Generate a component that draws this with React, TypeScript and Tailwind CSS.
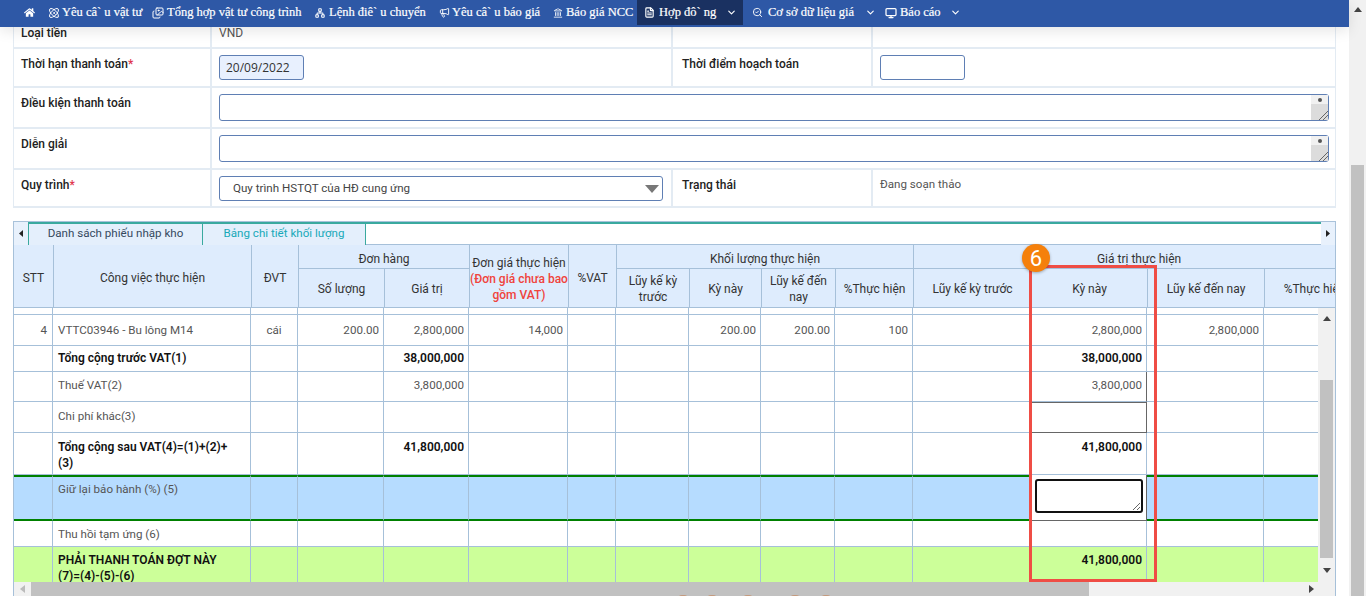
import type { ReactNode } from 'react'
import { ChevronDown, Atom, Images, Network, Megaphone, Landmark, FileText, SearchCheck, Monitor } from 'lucide-react'
import { FaHome } from 'react-icons/fa'

type NavItem = { label: string; icon: ReactNode; className: string; chevron?: boolean; active?: boolean }

const navItems: NavItem[] = [
  { label: 'Yêu câ` u vật tư', icon: <Atom size={12} strokeWidth={2} />, className: 'w-[104px] gap-[2px]' },
  { label: 'Tổng hợp vật tư công trình', icon: <Images size={12} strokeWidth={2} />, className: 'w-[163px] gap-[3px]' },
  { label: 'Lệnh điê` u chuyển', icon: <Network size={10} strokeWidth={2.5} />, className: 'w-[124px] gap-[4px]' },
  { label: 'Yêu câ` u báo giá', icon: <Megaphone size={11} strokeWidth={2} />, className: 'w-[114px] gap-[2px]' },
  { label: 'Báo giá NCC', icon: <Landmark size={10} strokeWidth={2} />, className: 'w-[84px] gap-[3px]' },
  { label: 'Hợp đô` ng', icon: <FileText size={11} strokeWidth={2.5} />, className: 'w-[106px] gap-[4px] pl-[7px]', chevron: true, active: true },
  { label: 'Cơ sở dữ liệu giá', icon: <SearchCheck size={11} strokeWidth={2} />, className: 'ml-[9px] w-[133px] gap-[5px]', chevron: true },
  { label: 'Báo cáo', icon: <Monitor size={12} strokeWidth={2.5} />, className: 'gap-[3px]', chevron: true },
]

const Nav = () => (
  <nav className="relative z-10 flex h-[27px] shrink-0 items-start bg-[#2e58a6] text-white shadow-[0_4px_14px_rgba(0,0,0,0.1)] font-['Liberation_Serif',serif] text-[12.5px] [-webkit-text-stroke:0.2px_white]">
    <FaHome className="ml-[24px] mt-[7px] w-[11px] shrink-0" size={11} />
    <div className="w-[13px] shrink-0" />
    {navItems.map((item) => (
      <div
        key={item.label}
        className={`flex h-[25px] shrink-0 items-center whitespace-nowrap ${item.className} ${item.active ? 'bg-[#1a3161]' : ''}`}
      >
        {item.icon}
        <span>{item.label}</span>
        {item.chevron ? <ChevronDown size={11} strokeWidth={2.5} className="ml-[6px]" /> : null}
      </div>
    ))}
  </nav>
)

const Label = ({ children, required, wide }: { children: ReactNode; required?: boolean; wide?: boolean }) => (
  <div className={`text-[12px] font-medium text-[#222] ${wide ? 'px-[9px]' : 'px-[7px]'}`}>
    {children}
    {required ? <span className="text-[#e0364c]">*</span> : null}
  </div>
)

const FakeTextarea = () => (
  <div className="flex h-[27px] w-full rounded-[3px] border border-[#5f7fb4] bg-white">
    <div className="flex-1" />
    <div className="flex w-[17px] flex-col">
      <div className="flex h-[9px] items-center justify-center bg-[#f1f1f1]">
        <div className="h-[4px] w-[4px] rounded-full bg-[#555]" />
      </div>
      <div className="relative flex-1 overflow-hidden bg-[#dcdcdc]">
        <svg className="absolute bottom-0 right-0" width="10" height="10" viewBox="0 0 10 10">
          <path d="M1 10 L10 1 M5 10 L10 5" stroke="#666" strokeWidth="1" />
        </svg>
      </div>
    </div>
  </div>
)

const FormPanel = () => (
  <div className="mx-[13px] w-[1323px] border-x border-[#e3ebf3] text-[12px] font-['Roboto',sans-serif]">
    <div className="grid h-[22px] grid-cols-[198px_461px_200px_1fr] border-b-2 border-[#e3ebf3]">
      <div className="border-r-2 border-[#e3ebf3]">
        <div className="-mt-[3px]">
          <Label>Loại tiền</Label>
        </div>
      </div>
      <div className="border-r-2 border-[#e3ebf3] px-[7px] text-[#555]">
        <div className="-mt-[3px]">VND</div>
      </div>
      <div className="border-r-2 border-[#e3ebf3]" />
      <div />
    </div>
    <div className="grid h-[39px] grid-cols-[198px_461px_200px_1fr] border-b-2 border-[#e3ebf3]">
      <div className="border-r-2 border-[#e3ebf3] pt-[6px]">
        <Label required>Thời hạn thanh toán</Label>
      </div>
      <div className="border-r-2 border-[#e3ebf3] px-[7px] pt-[6px]">
        <input
          readOnly
          value="20/09/2022"
          className="h-[25px] w-[85px] rounded-[3px] border border-[#5f7fb4] bg-[#e8f0fe] px-[6px] text-[12px] text-[#333] font-['Open_Sans',sans-serif]"
        />
      </div>
      <div className="border-r-2 border-[#e3ebf3] pt-[6px]">
        <Label wide>Thời điểm hoạch toán</Label>
      </div>
      <div className="px-[7px] pt-[6px]">
        <input readOnly className="h-[25px] w-[85px] rounded-[3px] border border-[#5f7fb4] bg-white" />
      </div>
    </div>
    <div className="grid h-[41px] grid-cols-[198px_1fr] border-b-2 border-[#e3ebf3]">
      <div className="border-r-2 border-[#e3ebf3] pt-[6px]">
        <Label>Điều kiện thanh toán</Label>
      </div>
      <div className="pl-[7px] pr-[6px] pt-[6px]">
        <FakeTextarea />
      </div>
    </div>
    <div className="grid h-[41px] grid-cols-[198px_1fr] border-b-2 border-[#e3ebf3]">
      <div className="border-r-2 border-[#e3ebf3] pt-[6px]">
        <Label>Diễn giải</Label>
      </div>
      <div className="pl-[7px] pr-[6px] pt-[6px]">
        <FakeTextarea />
      </div>
    </div>
    <div className="grid h-[38px] grid-cols-[198px_461px_200px_1fr] border-b-2 border-[#e3ebf3]">
      <div className="border-r-2 border-[#e3ebf3] pt-[6px]">
        <Label required>Quy trình</Label>
      </div>
      <div className="border-r-2 border-[#e3ebf3] px-[7px] pt-[6px]">
        <div className="flex h-[25px] w-[444px] items-center justify-between rounded-[3px] border border-[#5f7fb4] bg-white pl-[13px] pr-[3px] text-[11.6px] text-[#444]">
          <span>Quy trình HSTQT của HĐ cung ứng</span>
          <svg width="14" height="8" viewBox="0 0 14 8">
            <path d="M0 0 H14 L7 8 Z" fill="#777" />
          </svg>
        </div>
      </div>
      <div className="border-r-2 border-[#e3ebf3] pt-[6px]">
        <Label wide>Trạng thái</Label>
      </div>
      <div className="px-[7px] pt-[6px] text-[11.6px] text-[#555]">Đang soạn thảo</div>
    </div>
  </div>
)

const Tabs = () => (
  <div className="flex h-[24px] border-x border-t border-[#a9c2da] text-[11.6px]">
    <div className="flex w-[14px] items-center justify-center bg-[#e8f1fc]">
      <svg width="4" height="7" viewBox="0 0 4 7">
        <path d="M4 0 V7 L0 3.5 Z" fill="#222" />
      </svg>
    </div>
    <div className="flex flex-1 border-t-2 border-[#3aa99f]">
      <div className="flex w-[175px] items-center justify-center border-x border-[#3aa99f] bg-[#e4effc] pb-[1px] text-[#34495e]">
        Danh sách phiếu nhập kho
      </div>
      <div className="flex w-[163px] items-center justify-center border-r border-[#3aa99f] bg-[#e4effc] pb-[1px] text-[#17a9b8]">
        Bảng chi tiết khối lượng
      </div>
      <div className="flex-1 border-b border-[#a6c0d9]" />
    </div>
    <div className="flex w-[14px] items-center justify-center bg-[#e8f1fc]">
      <svg width="4" height="7" viewBox="0 0 4 7">
        <path d="M0 0 V7 L4 3.5 Z" fill="#222" />
      </svg>
    </div>
  </div>
)

const headCell = 'border-r border-b border-[#a6c0d9] bg-[#deecfd] px-[2px] text-center font-normal text-[#333] leading-[16px]'

const headCols = [40, 198, 47, 86, 85, 99, 48, 73, 72, 74, 78, 118, 116, 117, 100]

const HeaderTable = () => (
  <table className="w-[1351px] table-fixed border-separate border-spacing-0">
    <colgroup>
      {headCols.map((w, i) => (
        <col key={i} style={{ width: w }} />
      ))}
    </colgroup>
    <thead>
      <tr className="h-[24px]">
        <th rowSpan={2} className={`${headCell} pt-[3px]`}>STT</th>
        <th rowSpan={2} className={`${headCell} pt-[3px]`}>Công việc thực hiện</th>
        <th rowSpan={2} className={`${headCell} pt-[3px]`}>ĐVT</th>
        <th colSpan={2} className={`${headCell} pt-[4px]`}>Đơn hàng</th>
        <th rowSpan={2} className={`${headCell} whitespace-nowrap !px-0 pt-[5px]`}>
          Đơn giá thực hiện
          <br />
          <span className="font-medium text-[#f0433c]">
            (Đơn giá chưa bao
            <br />
            gồm VAT)
          </span>
        </th>
        <th rowSpan={2} className={`${headCell} pt-[3px]`}>%VAT</th>
        <th colSpan={4} className={`${headCell} pt-[4px]`}>Khối lượng thực hiện</th>
        <th colSpan={4} className={`${headCell} pt-[4px]`}>Giá trị thực hiện</th>
      </tr>
      <tr className="h-[39px]">
        <th className={`${headCell} pt-[2px]`}>Số lượng</th>
        <th className={`${headCell} pt-[2px]`}>Giá trị</th>
        <th className={`${headCell} pt-[2px]`}>Lũy kế kỳ trước</th>
        <th className={`${headCell} pt-[2px]`}>Kỳ này</th>
        <th className={`${headCell} pt-[2px]`}>Lũy kế đến nay</th>
        <th className={`${headCell} pt-[2px]`}>%Thực hiện</th>
        <th className={`${headCell} pt-[2px]`}>Lũy kế kỳ trước</th>
        <th className={`${headCell} pt-[2px]`}>Kỳ này</th>
        <th className={`${headCell} pt-[2px]`}>Lũy kế đến nay</th>
        <th className={`${headCell} whitespace-nowrap pt-[2px]`}>%Thực hiện</th>
      </tr>
    </thead>
  </table>
)

type Row = {
  height: string
  pad: string
  label: string
  bold?: boolean
  stt?: string
  unit?: string
  values: Record<number, string>
  bg?: string
  edge?: string
  current?: string
  edit?: boolean
}

const rows: Row[] = [
  { height: 'h-[7px]', pad: '', label: '', values: {} },
  {
    height: 'h-[31px]',
    pad: 'pt-[7px]',
    label: 'VTTC03946 - Bu lông M14',
    stt: '4',
    unit: 'cái',
    values: { 3: '200.00', 4: '2,800,000', 5: '14,000', 8: '200.00', 9: '200.00', 10: '100', 12: '2,800,000', 13: '2,800,000' },
  },
  { height: 'h-[26px]', pad: 'pt-[4px]', label: 'Tổng cộng trước VAT(1)', bold: true, values: { 4: '38,000,000', 12: '38,000,000' } },
  { height: 'h-[30px]', pad: 'pt-[5px]', label: 'Thuế VAT(2)', values: { 4: '3,800,000', 12: '3,800,000' }, current: 'border-r-[#666]' },
  { height: 'h-[31px]', pad: 'pt-[6px]', label: 'Chi phí khác(3)', values: {}, current: 'border-r-[#666] border-b-[#666] border-t border-t-[#666]' },
  { height: 'h-[42px]', pad: 'pt-[6px]', label: 'Tổng cộng sau VAT(4)=(1)+(2)+\n(3)', bold: true, values: { 4: '41,800,000', 12: '41,800,000' } },
  {
    height: 'h-[46px]',
    pad: 'pt-[4px]',
    label: 'Giữ lại bảo hành (%) (5)',
    values: {},
    bg: 'bg-[#b6dcff]',
    edge: 'border-t-2 border-t-[#008000] border-b-2 border-b-[#008000]',
    current: 'border-r-[#666] border-b-[#666] bg-white',
    edit: true,
  },
  { height: 'h-[26px]', pad: 'pt-[5px]', label: 'Thu hồi tạm ứng (6)', values: {} },
  { height: 'h-[42px]', pad: 'pt-[5px]', label: 'PHẢI THANH TOÁN ĐỢT NÀY\n(7)=(4)-(5)-(6)', bold: true, values: { 12: '41,800,000' }, bg: 'bg-[#ccff99]' },
]

const bodyCols = [39, 198, 47, 86, 85, 99, 48, 73, 72, 74, 78, 118, 116, 117, 100]

const BodyTable = () => (
  <table className="w-[1350px] table-fixed border-separate border-spacing-0 text-[11.6px]">
    <colgroup>
      {bodyCols.map((w, i) => (
        <col key={i} style={{ width: w }} />
      ))}
    </colgroup>
    <tbody>
      {rows.map((row) => (
        <tr key={row.label || 'spacer'} className={row.height}>
          {bodyCols.map((_, col) => {
            const base = `border-r border-b border-[#a6c0d9] align-top leading-[16px] ${row.pad} ${row.bg ?? 'bg-white'}`
            const tone = row.bold ? 'text-[12px] font-semibold text-[#111]' : 'text-[#555]'
            if (col === 0) {
              return (
                <td key={col} className={`${base} ${row.edge ?? ''} pr-[5px] text-right text-[#555]`}>
                  {row.stt}
                </td>
              )
            }
            if (col === 1) {
              return (
                <td key={col} className={`${base} ${row.edge ?? ''} whitespace-pre-line px-[5px] ${tone}`}>
                  {row.label}
                </td>
              )
            }
            if (col === 2) {
              return (
                <td key={col} className={`${base} ${row.edge ?? ''} text-center text-[#555]`}>
                  {row.unit}
                </td>
              )
            }
            if (col === 12) {
              return (
                <td key={col} className={`${base} ${row.current ?? ''} relative pr-[4px] text-right ${tone}`}>
                  {row.edit ? (
                    <textarea
                      readOnly
                      className="absolute left-[4px] top-[4px] h-[34px] w-[108px] rounded-[3px] border-2 border-[#111] bg-white"
                    />
                  ) : (
                    row.values[col]
                  )}
                </td>
              )
            }
            return (
              <td key={col} className={`${base} ${row.edge ?? ''} pr-[4px] text-right ${tone}`}>
                {row.values[col]}
              </td>
            )
          })}
        </tr>
      ))}
    </tbody>
  </table>
)

const Arrow = ({ up }: { up?: boolean }) => (
  <svg width="8" height="5" viewBox="0 0 8 5">
    <path d={up ? 'M0 5 H8 L4 0 Z' : 'M0 0 H8 L4 5 Z'} fill="#444" />
  </svg>
)

const Grid = () => (
  <div className="mx-[13px] mt-[13px] w-[1323px] text-[12px] font-['Roboto',sans-serif]">
    <Tabs />
    <div className="overflow-hidden border-x border-[#a6c0d9]">
      <HeaderTable />
    </div>
    <div className="flex h-[274px] border-x border-[#a6c0d9]">
      <div className="flex-1 overflow-hidden">
        <BodyTable />
      </div>
      <div className="flex w-[17px] shrink-0 flex-col bg-[#f1f1f1]">
        <div className="flex h-[72px] items-start justify-center pt-[8px]">
          <Arrow up />
        </div>
        <div className="mx-auto h-[178px] w-[13px] bg-[#c1c1c1]" />
        <div className="flex flex-1 items-center justify-center">
          <Arrow />
        </div>
      </div>
    </div>
    <div className="flex h-[14px] border-x border-[#a6c0d9] bg-[#f1f1f1]">
      <div className="flex w-[17px] items-center justify-center">
        <svg width="5" height="8" viewBox="0 0 5 8">
          <path d="M5 0 V8 L0 4 Z" fill="#bbb" />
        </svg>
      </div>
      <div className="w-[1058px] bg-[#c1c1c1]" />
      <div className="flex-1" />
      <div className="mr-[21px] flex items-center">
        <svg width="5" height="8" viewBox="0 0 5 8">
          <path d="M0 0 V8 L5 4 Z" fill="#444" />
        </svg>
      </div>
    </div>
  </div>
)

export default function App() {
  return (
    <div className="relative flex h-[596px] w-[1366px] overflow-hidden bg-white">
      <div className="flex w-[1349px] shrink-0 flex-col">
        <Nav />
        <FormPanel />
        <Grid />
      </div>
      <div className="flex w-[17px] flex-col bg-[#f1f1f1]">
        <div className="flex h-[165px] justify-center pt-[7px]">
          <Arrow up />
        </div>
        <div className="ml-[2px] w-[13px] flex-1 bg-[#c1c1c1]" />
      </div>

      {/* annotation over the grid */}
      <div className="pointer-events-none absolute left-[1029px] top-[265px] h-[317px] w-[128px] border-[3px] border-[#ef4d45]" />
      <div className="absolute left-[1022px] top-[244px] flex h-[28px] w-[28px] items-center justify-center rounded-full bg-[#f5800b] text-[22px] text-white shadow-[0_1px_3px_rgba(0,0,0,0.3)] font-['Roboto',sans-serif]">
        6
      </div>
      {[683, 712, 748, 795, 826].map((x) => (
        <div key={x} className="absolute top-[595px] h-[8px] w-[10px] rounded-full bg-[#c49a7e]" style={{ left: x - 5 }} />
      ))}
    </div>
  )
}
